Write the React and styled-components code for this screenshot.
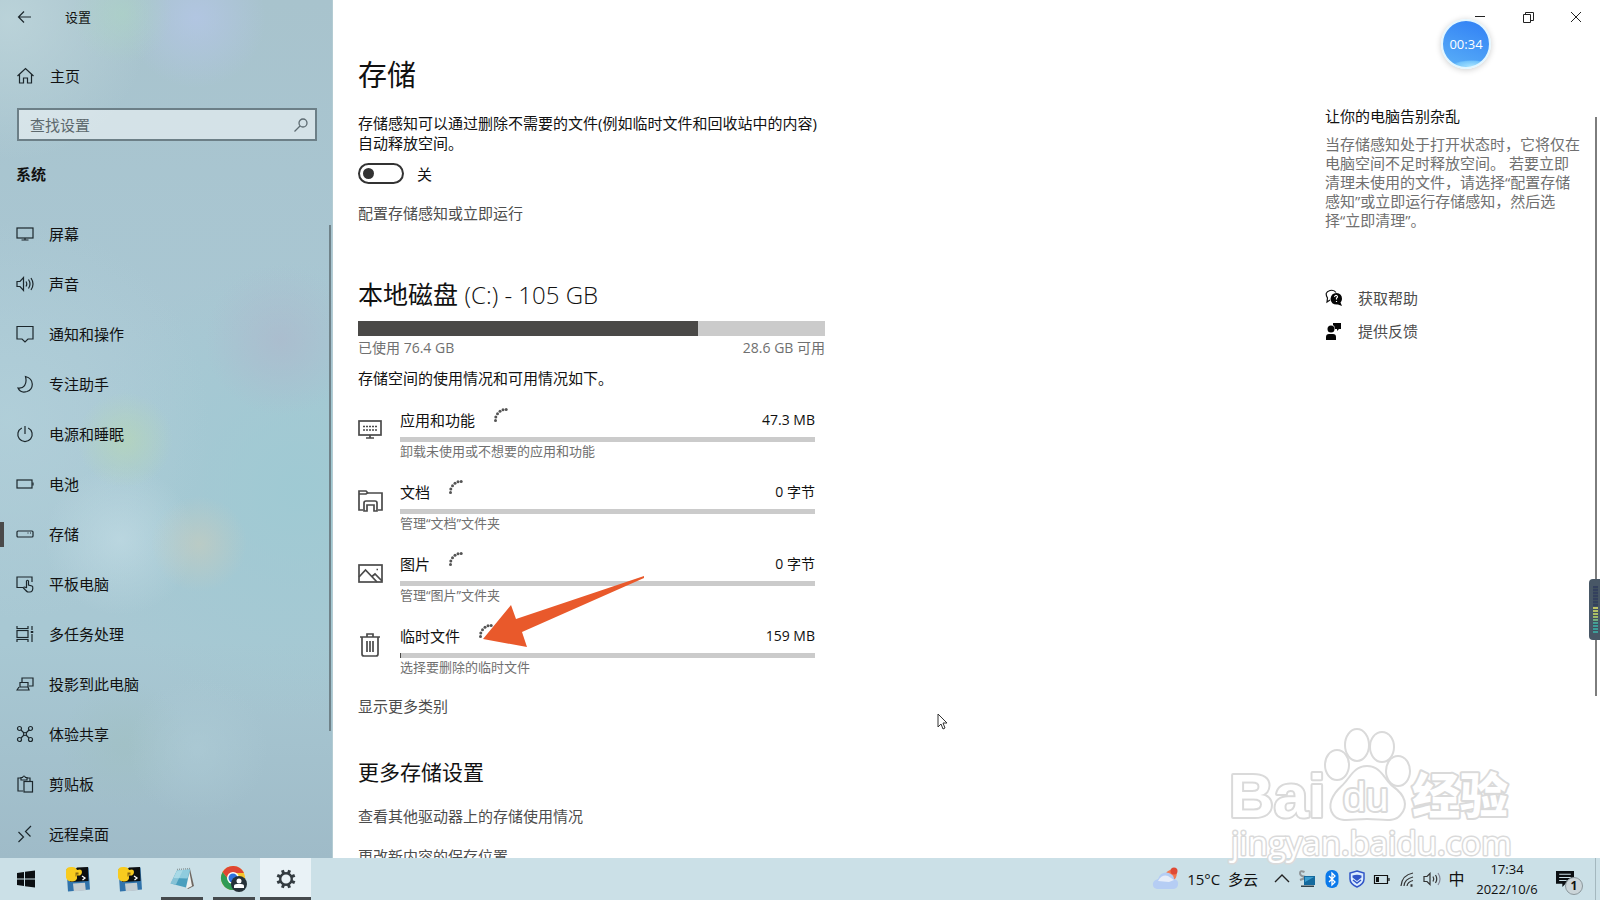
import React from 'react'
import styled, { createGlobalStyle } from 'styled-components'

const GlobalStyle = createGlobalStyle`
    *{
        box-sizing:border-box;
    }

    body{
        margin:0;
        font-family:"Open Sans","Noto Sans CJK SC",sans-serif;
        font-size:15px;
        line-height:20px;
        color:#111;
        background:#fff;
    }

    h1,h2,h3,p,ul{
        margin:0;
        padding:0;
        font-weight:400;
    }

    a{
        color:inherit;
        text-decoration:none;
    }

    button,input{
        font:inherit;
        color:inherit;
        border:0;
        padding:0;
        background:none;
    }

    svg{
        display:block;
        flex:none;
    }
`

const navItems = [
    {
        title:'屏幕',
        icon:<><rect x='1' y='3' width='16' height='10' /><path d='M9 13v2M5.500 15h7' /></>
    },
    {
        title:'声音',
        icon:<><path d='M1 6.500h3l3.500-4v13L4 11.500H1z' /><path d='M10 6.500q1.500 2.500 0 5M12.500 4.500q3 4.500 0 9M15 3q4 6 0 12' /></>
    },
    {
        title:'通知和操作',
        icon:<path d='M1 1.500h16v12.500h-5l-3 3-3-3H1z' />
    },
    {
        title:'专注助手',
        icon:<path d='M9.500 1.500c9 2.500 8.500 12.500 1.500 15-4 1.200-7.500-.2-9-3.500 5.500.8 9.500-3.500 7.500-11.500z' />
    },
    {
        title:'电源和睡眠',
        icon:<><path d='M9 1v8' /><path d='M5.800 3A7.200 7.200 0 1 0 12.200 3' /></>
    },
    {
        title:'电池',
        icon:<><rect x='1' y='5' width='15' height='8' /><path d='M17 7.500v3' /></>
    },
    {
        title:'存储',
        active:true,
        icon:<><rect x='1' y='6' width='16' height='6' rx='1' /><path d='M11.500 8h1M14 8h1' /></>
    },
    {
        title:'平板电脑',
        icon:<><path d='M7 12.500H1V2h15v5' /><path d='M10.500 13V6q1-1.500 2 0v4l3.500 1q1 .5.800 2.500-.3 3.500-2.800 3.500h-2q-1 0-4.500-4 .5-2 3 0' /></>
    },
    {
        title:'多任务处理',
        icon:<><path d='M1 1v2.500h11V1M1 17v-2.500h11V17M16 1v4M16 9v8' /><rect x='1' y='5.500' width='11' height='7' /><path d='M16 6v2' strokeWidth='2.500' /></>
    },
    {
        title:'投影到此电脑',
        icon:<><path d='M6 8V3h11v8h-4' /><path d='M4 7.500h8V12H4zM3 12l-2 3h12l-1-3' /></>
    },
    {
        title:'体验共享',
        icon:<><circle cx='3.500' cy='3.500' r='2' /><circle cx='14.500' cy='3.500' r='2' /><circle cx='3.500' cy='14.500' r='2' /><circle cx='14.500' cy='14.500' r='2' /><circle cx='9' cy='9' r='1.500' /><path d='M5 5l3 3M13 5l-3 3M5 13l3-3M13 13l-3-3' /></>
    },
    {
        title:'剪贴板',
        icon:<><path d='M7 16H2V3h3M11 3h3v3' /><path d='M5 5V2.500h1.500q1.500-3 3 0H11V5z' /><rect x='8' y='6.500' width='8.500' height='10.500' /></>
    },
    {
        title:'远程桌面',
        icon:<><path d='M2.500 7l5 5-5 5M15 1L9.500 6.500l5 5' /></>
    }
]

const categories = [
    {
        title:'应用和功能',
        size:'47.3 MB',
        note:'卸载未使用或不想要的应用和功能',
        used:0,
        icon:<><rect x='1' y='4' width='22' height='14' /><path d='M12 18v3M8 21h8' /><path d='M5 9.500h14M5 13h14' strokeDasharray='2 1' /></>
    },
    {
        title:'文档',
        size:'0 字节',
        note:'管理“文档”文件夹',
        used:0,
        icon:<><path d='M5 21H1V2h7l2 2h14v17h-4' /><path d='M1 5h7l2-1.500' /><path d='M6 22v-8q0-2 2-2h9q2 0 2 2v8h-3v-6H9v6z' /></>
    },
    {
        title:'图片',
        size:'0 字节',
        note:'管理“图片”文件夹',
        used:0,
        icon:<><rect x='1' y='4' width='23' height='17' /><path d='M1 16l6.500-7L19 21M14 15.500l3-2.500 7 7' /><path d='M18.500 8.500h1.500' /></>
    },
    {
        title:'临时文件',
        size:'159 MB',
        note:'选择要删除的临时文件',
        used:0.3,
        icon:<><path d='M2 4h20M9 4V1h6v3' /><path d='M4 4v17q0 2 2 2h12q2 0 2-2V4M9 8v11M12 8v11M15 8v11' /></>
    }
]

const trayIcons = [
    {
        title:'显示隐藏的图标',
        icon:<path d='M2 12l7-7 7 7' fill='none' stroke='#222' strokeWidth='1.400' />
    },
    {
        title:'远程连接',
        icon:<><path d='M6.500 2Q2 0 2 3t4 3.500T2 10' fill='none' stroke='#8f9699' strokeWidth='2' /><path d='M6 6h11v9H6z' fill='#146a9e' /><path d='M7 7h9l-9 5z' fill='#3c9ed0' /><path d='M3 15.500h13v1.500H3z' fill='#33434b' /></>
    },
    {
        title:'蓝牙',
        icon:<><rect x='2.500' y='0' width='13' height='18' rx='6' fill='#0b79ea' /><path d='M6 6l6 6-3 3V3l3 3-6 6' fill='none' stroke='#fff' strokeWidth='1.300' /></>
    },
    {
        title:'电脑管家',
        icon:<><path d='M9 1l7 2v6q0 5-7 8-7-3-7-8V3z' fill='#dcecff' stroke='#3155c8' strokeWidth='1.500' /><path d='M4.500 5.500Q9 4 13.500 5.500v2L9 11 4.500 7.500z' fill='#3155c8' /><path d='M5 10l4 3 4-3' fill='none' stroke='#3155c8' strokeWidth='1.500' /></>
    },
    {
        title:'电池',
        icon:<><path d='M1.500 5.500h13v8h-13zM16 8v3' fill='none' stroke='#111' strokeWidth='1.200' /><path d='M3 7h3v5H3z' fill='#111' /></>
    },
    {
        title:'网络',
        icon:<g fill='none' stroke='#333' strokeWidth='1.200'><path d='M3 16Q4 5 15 3M6 16q.5-7 9-9M9 16q.5-4 6-5.500' /><path d='M12.500 15.500h2' strokeWidth='2.500' /></g>
    },
    {
        title:'音量',
        icon:<g fill='none' stroke='#333' strokeWidth='1.200'><path d='M1 6.500h3l3-3v11l-3-3H1z' /><path d='M10 6.500q1.500 2.500 0 5M12.500 5q2.500 4 0 8' /><path d='M15 3q4 6 0 12' stroke='#889' /></g>
    }
]

const PythonIcon = () => (
    <svg width='26' height='26' viewBox='0 0 26 26'>
        <path d='M1.500 3l22-1.500L25 23.500 3 25.500z' fill='#3173ab' />
        <path d='M12 1.500l11-.500.500 14L5 16V10z' fill='#0c0e10' />
        <path d='M8 17.500l12-.800.800 7.800-12 .800z' fill='#c3ccd1' />
        <path d='M1 5q0-4 5-4 5-.500 6 3l3-.500q2 0 2 2.500t-2 3.500h-3v3q-1 3-5 3-5 0-6-4z' fill='#f8cb1f' />
        <path d='M10.500 6.500h3v2h-2v2h-1z' fill='#8a6a10' />
        <path d='M17 10l3 2-2.500 2' fill='none' stroke='#fff' strokeWidth='1.300' />
    </svg>
)

const NotepadIcon = () => (
    <svg width='26' height='26' viewBox='0 0 26 26'>
        <path d='M21 3l4 17-6 3-2-2z' fill='#6f6862' />
        <path d='M20 4l3 16-5 2.500-3-3z' fill='#eef1ef' />
        <path d='M8 4.500l13-1-4 18-15.500-4z' fill='#4a9fbe' />
        <path d='M8 4.500l13-1-2.500 9L4.500 12z' fill='#8fccde' />
        <path d='M8 4.500l6-.400-7 14.500-5.500-1.200z' fill='#c2e5ee' opacity='.5' />
        <path d='M8 3.500l14-1' stroke='#8d9a9d' strokeWidth='1.500' strokeDasharray='1 1' />
    </svg>
)

const ChromeIcon = () => (
    <svg width='28' height='28' viewBox='0 0 28 28'>
        <circle cx='13' cy='13' r='12' fill='#f7c52d' />
        <path d='M2.600 7A12 12 0 0 0 13 25l5-9-8 0z' fill='#2f9b55' />
        <path d='M2.600 7A12 12 0 0 1 24 8H13l-4 7z' fill='#df4533' />
        <circle cx='13' cy='13' r='6' fill='#fff' />
        <circle cx='13' cy='13' r='4.500' fill='#2e71dc' />
        <circle cx='19' cy='19' r='8' fill='#263138' />
        <circle cx='19' cy='16' r='2.500' fill='#fff' />
        <path d='M14 23v-2q0-2 3-2h4q3 0 3 2v2z' fill='#fff' />
    </svg>
)

const GearIcon = () => (
    <svg width='20' height='20' viewBox='0 0 20 20' fill='none' stroke='#333b40'>
        <circle cx='10' cy='10' r='5.800' strokeWidth='2.400' />
        {[0,45,90,135,180,225,270,315].map((deg)=>(
            <path key={deg} d='M10 4V.500' strokeWidth='3' transform={`rotate(${deg + 22.500} 10 10)`} />
        ))}
    </svg>
)

const WindowsIcon = () => (
    <svg width='18' height='18' viewBox='0 0 18 18' fill='#0b0f12'>
        <path d='M0 3l7-1v6.500H0zM8 1.800L18 .500v8H8zM0 9.500h7V16l-7-1zM8 9.500h10v8L8 16.200z' />
    </svg>
)

const tasks = [
    { title:'开始', icon:<WindowsIcon /> },
    { title:'Python 1', icon:<PythonIcon /> },
    { title:'Python 2', icon:<PythonIcon /> },
    { title:'记事本', icon:<NotepadIcon />, open:true },
    { title:'Chrome', icon:<ChromeIcon />, open:true },
    { title:'设置', icon:<GearIcon />, open:true, active:true }
]

const Spinner = () => (
    <svg width='14' height='14' viewBox='0 2 14 14' fill='#555' overflow='visible'>
        {[[1.500,12.500],[1.800,9],[3.500,5.700],[6,3.300],[9,1.800],[12.200,1.400]].map(([x,y])=>(
            <circle key={x} cx={x} cy={y} r='1.500' />
        ))}
    </svg>
)

const Sidebar = () => (
    <Side>
        <SideTitle>
            <button aria-label='返回'>
                <Glyph viewBox='0 0 18 18'><path d='M15 9H3M8 3.500L2.500 9 8 14.500' /></Glyph>
            </button>
            设置
        </SideTitle>
        <HomeLink href='#home'>
            <Glyph viewBox='0 0 18 18'><path d='M1.500 9L9.500 1.500 17.500 9M3.500 7.500V16h4v-5h4v5h4V7.500' /></Glyph>
            主页
        </HomeLink>
        <SearchBox>
            <input type='text' placeholder='查找设置' aria-label='查找设置' />
            <svg width='14' height='14' viewBox='0 0 14 14' fill='none' stroke='#5d6b71' strokeWidth='1.300'>
                <circle cx='9' cy='5' r='4' />
                <path d='M6 8l-5.500 5.500' />
            </svg>
        </SearchBox>
        <Group>系统</Group>
        <NavArea>
            <NavList>
                {navItems.map((ele)=>(
                    <li key={ele.title}>
                        <NavLink href='#nav' $active={ele.active}>
                            <Glyph viewBox='0 0 18 18'>{ele.icon}</Glyph>
                            {ele.title}
                        </NavLink>
                    </li>
                ))}
            </NavList>
            <SideScroll />
        </NavArea>
    </Side>
)

const Storage = () => (
    <Content>
        <h1>存储</h1>
        <Intro>存储感知可以通过删除不需要的文件(例如临时文件和回收站中的内容)<br />自动释放空间。</Intro>
        <Toggle>
            <input type='checkbox' role='switch' />
            关
        </Toggle>
        <TextLink href='#config'>配置存储感知或立即运行</TextLink>
        <h2>本地磁盘 <DiskName>(C:) - 105 GB</DiskName></h2>
        <DiskBar><div style={{ width:`${76.4 / 105 * 100}%` }} /></DiskBar>
        <DiskInfo>
            <span>已使用 76.4 GB</span>
            <span>28.6 GB 可用</span>
        </DiskInfo>
        <Usage>存储空间的使用情况和可用情况如下。</Usage>
        <Categories>
            {categories.map((ele)=>(
                <Category href='#category' key={ele.title}>
                    <CategoryIcon viewBox='0 0 25 25'>{ele.icon}</CategoryIcon>
                    <div>
                        <CategoryHead>
                            <span>{ele.title}</span>
                            <Spinner />
                            <Size>{ele.size}</Size>
                        </CategoryHead>
                        <CategoryBar><div style={{ width:`${ele.used}%` }} /></CategoryBar>
                        <Note>{ele.note}</Note>
                    </div>
                </Category>
            ))}
            <Arrow viewBox='0 0 166 74'>
                <path d='M3 64L31 30l5 14L164 1v2L42 57l5 15z' fill='#e9592b' />
            </Arrow>
        </Categories>
        <TextLink href='#more'>显示更多类别</TextLink>
        <h3>更多存储设置</h3>
        <TextLink href='#drives'>查看其他驱动器上的存储使用情况</TextLink>
        <TextLink href='#location'>更改新内容的保存位置</TextLink>
    </Content>
)

const Help = () => (
    <Aside>
        <p>让你的电脑告别杂乱</p>
        <HelpText>当存储感知处于打开状态时，它将仅在电脑空间不足时释放空间。 若要立即清理未使用的文件，请选择“配置存储感知”或立即运行存储感知，然后选择“立即清理”。</HelpText>
        <HelpLink href='#help'>
            <svg width='18' height='18' viewBox='0 0 18 18'>
                <path d='M5 11l-3 2 .500-4Q-1 3 5 1.500q4-1 6 2' fill='none' stroke='#111' strokeWidth='1.200' />
                <path d='M17 17l-4-1.500Q6 16 5.500 10 6 4 11.500 4q5.500.500 5.500 6-.2 2-1.500 3.500z' fill='#050505' />
                <path d='M9.500 8q.5-2 2-1.500 2 1 0 2.500v1.500M11.500 12v1' fill='none' stroke='#fff' strokeWidth='1.200' />
            </svg>
            获取帮助
        </HelpLink>
        <HelpLink href='#feedback'>
            <svg width='18' height='18' viewBox='0 0 18 18' fill='#050505'>
                <circle cx='6' cy='7' r='3.500' />
                <path d='M1 18v-3q0-3 3-3h4q3 0 3 3v3zM8 1h8v6h-2l-2 2V7h-2q0-3-2-4z' />
            </svg>
            提供反馈
        </HelpLink>
    </Aside>
)

const Watermark = () => (
    <Brand viewBox='0 0 290 140'>
        <g fill='#fff' stroke='#dadada' strokeWidth='4' strokeLinejoin='round' paintOrder='stroke'>
            <text x='4' y='92' fontFamily='Liberation Sans' fontWeight='700' fontSize='62'>Bai</text>
            <text x='187' y='88' fontFamily='Noto Sans CJK SC' fontWeight='900' fontSize='48'>经验</text>
            <ellipse cx='112' cy='40' rx='11' ry='14' />
            <ellipse cx='132' cy='20' rx='11' ry='15' />
            <ellipse cx='157' cy='22' rx='11' ry='14' />
            <ellipse cx='173' cy='46' rx='11' ry='14' />
            <path d='M142 42c13 0 16 12 25 20 13 9 15 19 8 27-6 8-17 4-33 4s-27 4-33-4c-6-8-1-19 8-27 9-8 12-20 25-20z' />
            <text x='118' y='86' fontFamily='Liberation Sans' fontSize='41'>du</text>
            <text x='6' y='130' fontFamily='Open Sans' fontSize='33' strokeWidth='3'>jingyan.baidu.com</text>
        </g>
    </Brand>
)

const Taskbar = () => (
    <Bar>
        {tasks.map((ele)=>(
            <Task key={ele.title} aria-label={ele.title} $open={ele.open} $active={ele.active}>{ele.icon}</Task>
        ))}
        <Weather>
            <svg width='27' height='24' viewBox='0 0 27 24'>
                <path d='M14 6q4-5 9-3 4 5-1 10z' fill='#f37a52' />
                <circle cx='22' cy='4' r='3.500' fill='#df4a35' />
                <path d='M5 22q-5-1-4-6 1-3 5-4 3-8 11-6 5 2 5 6 5 1 4 6-1 4-5 4z' fill='#b5cdf4' />
                <path d='M6 14q4-7 10-5l6 4-5 2z' fill='#e6edf9' />
            </svg>
            15°C&nbsp; 多云
        </Weather>
        {trayIcons.map((ele)=>(
            <Tray key={ele.title} aria-label={ele.title}>
                <svg width='18' height='18' viewBox='0 0 18 18'>{ele.icon}</svg>
            </Tray>
        ))}
        <Tray>中</Tray>
        <Clock>
            <span>17:34</span>
            <span>2022/10/6</span>
        </Clock>
        <Notice aria-label='通知'>
            <svg width='18' height='18' viewBox='0 0 17 17'>
                <path d='M0 1h17v12H9l-3 3v-3H0z' fill='#0b0f12' />
                <path d='M3 4h11M3 7h11M3 10h7' stroke='#cbe0e7' />
            </svg>
            <b>1</b>
        </Notice>
    </Bar>
)

const App = () => {
  return (
    <Screen>
        <GlobalStyle />
        <Window>
            <Sidebar />
            <Main>
                <Controls>
                    <button aria-label='最小化'><svg width='12' height='12' viewBox='0 0 12 12'><path d='M1 5.500h10' stroke='#222' /></svg></button>
                    <button aria-label='还原'><svg width='12' height='12' viewBox='0 0 12 12' fill='none' stroke='#222'><path d='M1.500 3.500h7v8h-7zM3.500 3.500v-2h8v8h-3' /></svg></button>
                    <button aria-label='关闭'><svg width='12' height='12' viewBox='0 0 12 12' stroke='#222'><path d='M1 1l10 10M11 1L1 11' /></svg></button>
                </Controls>
                <Columns>
                    <Storage />
                    <Help />
                </Columns>
                <PageScroll />
                <Meter><i /></Meter>
                <Timer>00:34</Timer>
            </Main>
        </Window>
        <Taskbar />
        <Watermark />
        <Cursor viewBox='0 0 12 18'>
            <path d='M1 1v13l3-3 2 5 2-1-2-5h4z' fill='#fff' stroke='#333' />
        </Cursor>
    </Screen>
  )
}

const Screen = styled.div`
    position:relative;
    display:flex;
    flex-direction:column;
    height:100vh;
    overflow:hidden;
`

const Window = styled.div`
    flex:1;
    min-height:0;
    display:flex;
`

const Side = styled.aside`
    flex:none;
    width:333px;
    display:flex;
    flex-direction:column;
    overflow:hidden;
    border-right:1px solid #b4ccd3;
    background:
        radial-gradient(circle at 122px 14px, rgba(172,212,196,0.6), transparent 50px),
        radial-gradient(circle at 196px 18px, rgba(180,198,230,0.8), transparent 70px),
        radial-gradient(circle at 125px 440px, rgba(182,214,182,0.7), transparent 48px),
        radial-gradient(circle at 199px 544px, rgba(201,204,188,0.6), transparent 48px),
        radial-gradient(circle at 280px 340px, rgba(174,182,203,0.6), transparent 75px),
        radial-gradient(circle at 120px 540px, rgba(190,217,226,0.8), transparent 75px),
        radial-gradient(circle at 198px 748px, rgba(174,204,214,0.6), transparent 70px),
        radial-gradient(circle at 125px 745px, rgba(160,192,194,0.6), transparent 65px),
        radial-gradient(circle at 10px 20px, rgba(188,212,218,0.9), transparent 140px),
        radial-gradient(circle at 10px 420px, rgba(178,208,218,0.8), transparent 200px),
        radial-gradient(circle at 300px 490px, rgba(158,202,211,0.9), transparent 230px),
        linear-gradient(#a8c3cd, #a9c7d3 40%, #a8c8d3 75%, #9fbbc8);
`

const Glyph = styled.svg`
    width:18px;
    height:18px;
    fill:none;
    stroke:#1c272c;
    stroke-width:1.2;
`

const SideTitle = styled.div`
    display:flex;
    align-items:center;
    gap:31px;
    height:33px;
    padding-left:16px;
    font-size:13px;
`

const HomeLink = styled.a`
    display:flex;
    align-items:center;
    gap:16px;
    height:50px;
    margin-top:18px;
    padding-left:16px;
`

const SearchBox = styled.div`
    display:flex;
    align-items:center;
    height:33px;
    margin:7px 15px 0 17px;
    padding:0 7px 0 11px;
    border:2px solid #6c7f87;
    background:rgba(255,255,255,0.5);

    input{
        flex:1;
        min-width:0;
        outline:none;
    }

    input::placeholder{
        color:#5c686d;
        opacity:1;
    }
`

const Group = styled.div`
    margin-top:23px;
    padding-left:16px;
    font-weight:700;
`

const NavArea = styled.div`
    flex:1;
    min-height:0;
    display:flex;
    justify-content:space-between;
    margin-top:25px;
`

const NavList = styled.ul`
    flex:1;
    list-style:none;
`

const NavLink = styled.a`
    position:relative;
    display:flex;
    align-items:center;
    gap:15px;
    height:50px;
    padding-left:16px;

    &::before{
        content:'';
        display:${({ $active }) => $active ? 'block' : 'none'};
        position:absolute;
        left:0;
        width:4px;
        height:25px;
        background:#4a4a4a;
    }
`

const SideScroll = styled.div`
    width:2px;
    height:78%;
    margin:16px 1px 0 0;
    background:#6f8289;
`

const Main = styled.main`
    position:relative;
    flex:1;
    min-width:0;
    display:flex;
    flex-direction:column;
    overflow:hidden;
`

const Controls = styled.div`
    flex:none;
    display:flex;
    justify-content:flex-end;
    height:33px;

    button{
        display:grid;
        place-items:center;
        width:48px;
    }
`

const Columns = styled.div`
    flex:1;
    min-height:0;
    display:flex;
    justify-content:space-between;
    padding-left:25px;
`

const Content = styled.section`
    width:467px;

    h1{
        margin-top:22px;
        font-size:29px;
        line-height:40px;
    }

    h2{
        margin-top:53px;
        font-size:25px;
        line-height:36px;
    }

    h3{
        margin:41px 0 19px;
        font-size:21px;
        line-height:30px;
    }
`

const DiskName = styled.span`
    font-size:24px;
    font-weight:300;
`

const Intro = styled.p`
    margin-top:18px;
    white-space:nowrap;
`

const Toggle = styled.label`
    display:flex;
    align-items:center;
    gap:13px;
    height:21px;
    margin:10px 0 19px;

    input{
        appearance:none;
        display:flex;
        align-items:center;
        width:46px;
        height:21px;
        margin:0;
        padding-left:3px;
        border:2px solid #333;
        border-radius:11px;
    }

    input::before{
        content:'';
        width:11px;
        height:11px;
        border-radius:50%;
        background:#333;
    }
`

const TextLink = styled.a`
    display:block;
    color:#4d4d4d;

    & + &{
        margin-top:20px;
    }
`

const DiskBar = styled.div`
    height:15px;
    margin-top:8px;
    background:#cbcbcb;

    div{
        height:100%;
        background:#4a4947;
    }
`

const DiskInfo = styled.div`
    display:flex;
    justify-content:space-between;
    margin-top:2px;
    font-size:14px;
    color:#707070;
`

const Usage = styled.p`
    margin-top:10px;
`

const Categories = styled.div`
    position:relative;
    display:grid;
    gap:22px;
    margin:22px 10px 20px 0;
`

const Category = styled.a`
    display:grid;
    grid-template-columns:25px 1fr;
    gap:17px;
    align-items:center;
`

const CategoryIcon = styled.svg`
    width:25px;
    height:25px;
    fill:none;
    stroke:#4a4a4a;
    stroke-width:1.7;
    margin-bottom:12px;
`

const CategoryHead = styled.div`
    display:flex;
    gap:19px;
    height:27px;
`

const Size = styled.span`
    margin-left:auto;
    font-size:14px;
`

const CategoryBar = styled.div`
    height:5px;
    background:#cbcbcb;

    div{
        height:100%;
        background:#4a4947;
    }
`

const Note = styled.div`
    font-size:13px;
    line-height:18px;
    color:#707070;
`

const Arrow = styled.svg`
    position:absolute;
    left:122px;
    top:165px;
    width:166px;
`

const Aside = styled.aside`
    flex:none;
    width:275px;
    padding:73px 19px 0 0;
`

const HelpText = styled.p`
    margin:9px 0 58px;
    line-height:19px;
    color:#707070;
`

const HelpLink = styled.a`
    display:flex;
    align-items:center;
    gap:15px;
    margin-bottom:13px;
    color:#4d4d4d;
`

const PageScroll = styled.div`
    position:absolute;
    right:3px;
    top:117px;
    bottom:162px;
    width:2px;
    background:#7d7d7d;
`

const Meter = styled.div`
    position:absolute;
    right:0;
    top:579px;
    width:11px;
    height:61px;
    padding:7px 2px 7px 4px;
    border-radius:4px 0 0 4px;
    background:#485766;

    i{
        display:block;
        height:100%;
        background:
            repeating-linear-gradient(transparent 0 2px, #40505e 2px 3px),
            linear-gradient(#34415e 42%, #c5c565 42%, #a5bd65 65%, #3d9d99 80%);
    }
`

const Timer = styled.div`
    position:absolute;
    right:109px;
    top:19px;
    display:grid;
    place-items:center;
    width:50px;
    height:50px;
    border:2px solid #e3f6ff;
    border-radius:50%;
    font-size:13px;
    color:#fff;
    background:
        radial-gradient(ellipse 20px 6px at 62% 98%, #a5e2ff, #74c4fb 80%, transparent),
        linear-gradient(200deg, #2f7ff5, #5bb0f7);
    box-shadow:0 1px 6px rgba(0,0,0,0.2);
`

const Bar = styled.footer`
    flex:none;
    display:flex;
    height:42px;
    padding-right:4px;
    background:#cbe0e7;
`

const Task = styled.button`
    position:relative;
    display:grid;
    place-items:center;
    width:${({ $active }) => $active ? '51px' : '52px'};
    background:${({ $active }) => $active ? '#e9f2f6' : 'none'};

    &::after{
        content:'';
        display:${({ $open }) => $open ? 'block' : 'none'};
        position:absolute;
        bottom:0;
        width:${({ $active }) => $active ? '51px' : '42px'};
        height:3px;
        background:#454a4d;
    }
`

const Weather = styled.div`
    display:flex;
    align-items:center;
    gap:8px;
    margin-left:auto;
    padding-right:11px;
    white-space:nowrap;
`

const Tray = styled.button`
    display:grid;
    place-items:center;
    width:25px;
    font-size:16px;
`

const Clock = styled.time`
    display:flex;
    flex-direction:column;
    align-items:center;
    justify-content:center;
    width:76px;
    font-size:13px;
`

const Notice = styled.button`
    position:relative;
    display:grid;
    place-items:center;
    width:51px;
    padding-right:10px;
    border-right:1px solid #a4b8bf;

    b{
        position:absolute;
        left:20px;
        top:19px;
        width:18px;
        border:1px solid #8b979c;
        border-radius:50%;
        font-size:12px;
        line-height:16px;
        background:#cbd5d9;
    }
`

const Brand = styled.svg`
    position:absolute;
    right:85px;
    bottom:35px;
    width:290px;
    pointer-events:none;
`

const Cursor = styled.svg`
    position:absolute;
    left:937px;
    top:713px;
    width:12px;
`

export default App
